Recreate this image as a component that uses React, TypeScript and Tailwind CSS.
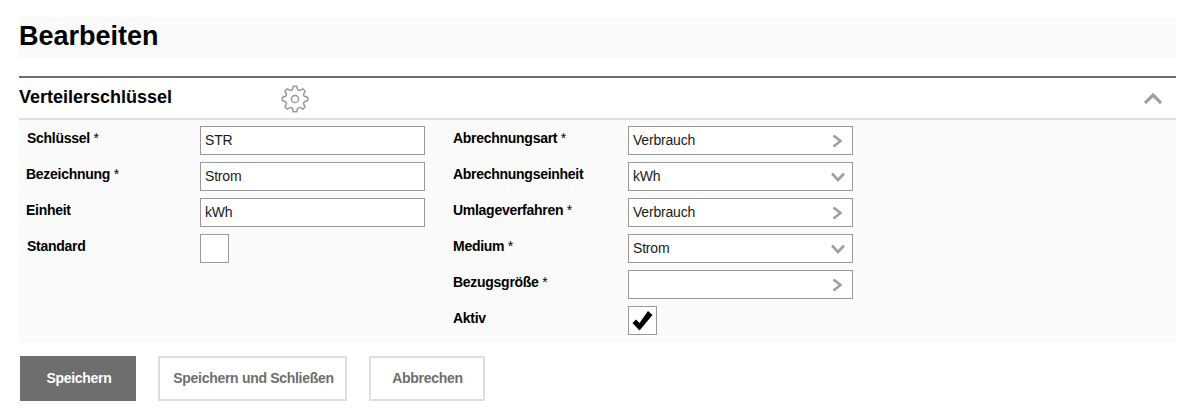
import React from "react";

const gearPath = (() => {
  const cx = 14, cy = 14, teeth = 8, outer = 12.8, inner = 9.6;
  const pts: string[] = [];
  for (let i = 0; i < teeth; i++) {
    const a = (i * 2 * Math.PI) / teeth - Math.PI / 2;
    const s = (2 * Math.PI) / teeth;
    const seq: [number, number][] = [
      [inner, a - s * 0.36],
      [outer, a - s * 0.17],
      [outer, a + s * 0.17],
      [inner, a + s * 0.36],
    ];
    for (const [r, t] of seq) {
      pts.push(`${(cx + r * Math.cos(t)).toFixed(2)} ${(cy + r * Math.sin(t)).toFixed(2)}`);
    }
  }
  return `M${pts.join(" L")} Z`;
})();

const Chevron = ({ dir }: { dir: "right" | "down" }) =>
  dir === "right" ? (
    <svg width="14" height="14" viewBox="0 0 14 14" fill="none" stroke="#a0a0a0" strokeWidth="2.6" className="shrink-0">
      <path d="M2.5 1.5 L9.5 7 L2.5 12.5" />
    </svg>
  ) : (
    <svg width="14" height="14" viewBox="0 0 14 14" fill="none" stroke="#a0a0a0" strokeWidth="2.6" className="shrink-0">
      <path d="M1 3.5 L7 10 L13 3.5" />
    </svg>
  );

const Label = ({ text, star, className = "" }: { text: string; star?: boolean; className?: string }) => (
  <div className={`text-[14px] tracking-[-0.28px] leading-[16px] text-black pt-[4px] ${className}`}>
    <span className="font-bold">{text}</span>
    {star && <span className="font-normal"> *</span>}
  </div>
);

const Field = ({ value, icon }: { value?: string; icon?: "right" | "down" }) => (
  <div className="w-[225px] h-[29px] border border-[#999] bg-white flex items-center justify-between pl-[4px] pr-[7px] text-[14px] tracking-[-0.2px] text-[#1a1a1a]">
    <span>{value}</span>
    {icon && <Chevron dir={icon} />}
  </div>
);

const Check = ({ checked }: { checked?: boolean }) => (
  <div className="w-[29px] h-[29px] border border-[#999] bg-white flex items-center justify-center">
    {checked && (
      <svg width="21" height="21" viewBox="0 0 21 21">
        <path d="M0.5 13 L4 9.5 L7.5 13 L16 1 L20.5 5 L7.5 20.5 Z" fill="#000" />
      </svg>
    )}
  </div>
);

const Row = ({ children }: { children: React.ReactNode }) => <div className="flex h-[29px]">{children}</div>;

export default function App() {
  return (
    <div className="w-[1193px] h-[413px] bg-white pt-[17px] px-[19px] font-['Liberation_Sans',Arial,sans-serif] overflow-hidden">
      <div className="w-[1157px] h-[41px] bg-[#fafafa] flex items-center">
        <h1 className="text-[27px] leading-[36px] font-bold text-black -mt-[4px]">Bearbeiten</h1>
      </div>
      <div className="w-[1157px] mt-[18px] border-t-2 border-[#6e6e6e]">
        <div className="h-[42px] border-b-2 border-[#dedede] flex items-center">
          <h2 className="text-[18px] leading-[22px] font-bold text-black w-[262px] -mt-[3px]">Verteilerschlüssel</h2>
          <svg width="28" height="28" viewBox="0 0 28 28" fill="none" stroke="#999" strokeWidth="1.5" strokeLinejoin="round" className="mt-[1px]">
            <path d={gearPath} />
            <circle cx="14" cy="14" r="3.6" />
          </svg>
          <svg width="18" height="12" viewBox="0 0 18 12" fill="none" stroke="#a0a0a0" strokeWidth="3.2" className="ml-auto mr-[14px]">
            <path d="M1 11 L9 3 L17 11" />
          </svg>
        </div>
        <div className="h-[223px] bg-[#fafafa] pt-[6px] flex">
          <div className="flex flex-col gap-[7px] w-[434px]">
            <Row><Label text="Schlüssel" star className="w-[181px] pl-[8px]" /><Field value="STR" /></Row>
            <Row><Label text="Bezeichnung" star className="w-[181px] pl-[7px]" /><Field value="Strom" /></Row>
            <Row><Label text="Einheit" className="w-[181px] pl-[7px]" /><Field value="kWh" /></Row>
            <Row><Label text="Standard" className="w-[181px] pl-[8px]" /><Check /></Row>
          </div>
          <div className="flex flex-col gap-[7px]">
            <Row><Label text="Abrechnungsart" star className="w-[175px]" /><Field value="Verbrauch" icon="right" /></Row>
            <Row><Label text="Abrechnungseinheit" className="w-[175px]" /><Field value="kWh" icon="down" /></Row>
            <Row><Label text="Umlageverfahren" star className="w-[175px]" /><Field value="Verbrauch" icon="right" /></Row>
            <Row><Label text="Medium" star className="w-[175px]" /><Field value="Strom" icon="down" /></Row>
            <Row><Label text="Bezugsgröße" star className="w-[175px]" /><Field icon="right" /></Row>
            <Row><Label text="Aktiv" className="w-[175px]" /><Check checked /></Row>
          </div>
        </div>
      </div>
      <div className="mt-[13px] ml-[1px] flex gap-[22px]">
        <button className="w-[116px] h-[45px] pl-[2px] bg-[#6e6e6e] text-white text-[14px] tracking-[-0.3px] font-bold">Speichern</button>
        <button className="w-[189px] h-[45px] pl-[2px] bg-white border-2 border-[#dedede] text-[#6e6e6e] text-[14px] tracking-[-0.3px] font-bold">Speichern und Schließen</button>
        <button className="w-[116px] h-[45px] pl-[1px] bg-white border-2 border-[#dedede] text-[#6e6e6e] text-[14px] tracking-[-0.3px] font-bold">Abbrechen</button>
      </div>
    </div>
  );
}
